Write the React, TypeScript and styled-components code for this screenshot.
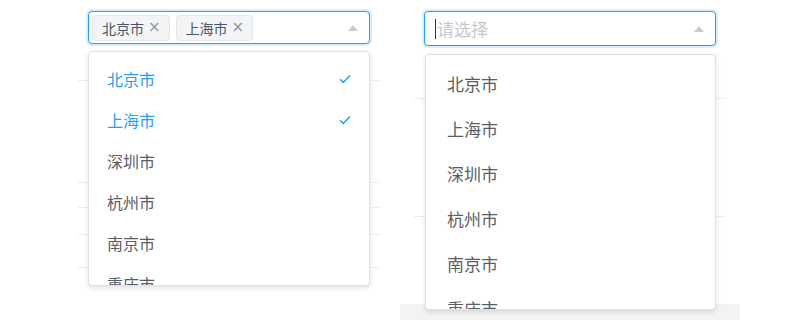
import React from 'react';
import styled, { createGlobalStyle } from 'styled-components';

const CITIES = ['北京市', '上海市', '深圳市', '杭州市', '南京市', '重庆市'];

const GlobalStyle = createGlobalStyle`
  html, body {
    margin: 0;
    padding: 0;
    background: #fff;
  }
  body {
    font-family: "Noto Sans CJK SC", "Noto Sans", sans-serif;
  }
`;

export default function App() {
  const selected = ['北京市', '上海市'];

  return (
    <Page>
      <GlobalStyle />
      <LeftPanel>
        <Select>
          <Tags>
            {selected.map((city) => (
              <Tag key={city}>
                {city}
                <TagClose>×</TagClose>
              </Tag>
            ))}
          </Tags>
          <Arrow />
        </Select>
        <Backdrop>
          <BackRow $h={36} />
          <BackRow $h={101} />
          <BackRow $h={24} />
          <BackRow $h={26} />
          <BackRow $h={32} />
        </Backdrop>
        <Dropdown $wide={false} $height={235} $rowHeight={41} $fontSize={16} $padLeft={18}>
          {CITIES.map((city) => {
            const isActive = selected.includes(city);
            return (
              <Option key={city} $active={isActive}>
                {city}
                {isActive && (
                  <CheckIcon viewBox="0 0 12 10" width="12" height="10">
                    <path d="M1 5.2 L4.3 8.4 L11 1.4" fill="none" stroke="#20a0ff" strokeWidth="1.5" />
                  </CheckIcon>
                )}
              </Option>
            );
          })}
        </Dropdown>
      </LeftPanel>

      <RightPanel>
        <Select $tall>
          <Placeholder>
            <Caret />
            请选择
          </Placeholder>
          <Arrow />
        </Select>
        <Backdrop>
          <BackRow $h={52} />
          <BackRow $h={117} />
        </Backdrop>
        <Dropdown $wide $height={256} $rowHeight={45} $fontSize={17} $padLeft={21}>
          {CITIES.map((city) => (
            <Option key={city} $active={false}>
              {city}
            </Option>
          ))}
        </Dropdown>
        <BottomStrip />
      </RightPanel>
    </Page>
  );
}

const Page = styled.div`
  display: flex;
  width: 800px;
  height: 320px;
  overflow: hidden;
  background: #fff;
`;

const LeftPanel = styled.div`
  position: relative;
  margin-left: 78px;
  width: 282px;
  padding: 11px 10px 0;
`;

const RightPanel = styled.div`
  position: relative;
  isolation: isolate;
  margin-left: 20px;
  width: 292px;
  padding: 11px 24px 0 24px;
`;

const Select = styled.div<{ $tall?: boolean }>`
  display: flex;
  align-items: center;
  justify-content: space-between;
  box-sizing: border-box;
  height: ${(p) => (p.$tall ? '35px' : '33px')};
  padding: 0 11px 0 3px;
  border: 1px solid #20a0ff;
  border-radius: 4px;
  box-shadow: 0 0 0 2px rgba(32, 160, 255, 0.18);
  background: #fff;
`;

const Tags = styled.div`
  display: flex;
  gap: 6px;
`;

const Tag = styled.span`
  display: flex;
  align-items: center;
  gap: 4px;
  box-sizing: border-box;
  height: 26px;
  padding: 0 8px 0 9px;
  border: 1px solid #e4e6ea;
  border-radius: 4px;
  background: #f3f4f6;
  color: #48576a;
  font-size: 14px;
`;

const TagClose = styled.span`
  font-family: "DejaVu Sans", sans-serif;
  font-size: 15px;
  color: #8a94a2;
  line-height: 1;
`;

const Arrow = styled.span`
  width: 0;
  height: 0;
  border-left: 5px solid transparent;
  border-right: 5px solid transparent;
  border-bottom: 6px solid #c8ccd2;
  margin-top: 1px;
`;

const Placeholder = styled.span`
  display: flex;
  align-items: center;
  padding-left: 7px;
  color: #c5c9cf;
  font-size: 17px;
`;

const Caret = styled.span`
  width: 1px;
  height: 20px;
  background: #333;
  margin-right: 1px;
`;

const Backdrop = styled.div`
  display: flex;
  flex-direction: column;
  margin: 0 -10px;
`;

const BackRow = styled.div<{ $h: number }>`
  height: ${(p) => p.$h}px;
  border-bottom: 1px solid #eceef1;
`;

const Dropdown = styled.ul<{
  $wide: boolean;
  $height: number;
  $rowHeight: number;
  $fontSize: number;
  $padLeft: number;
}>`
  position: absolute;
  top: ${(p) => (p.$wide ? 54 : 51)}px;
  left: ${(p) => (p.$wide ? 25 : 10)}px;
  right: ${(p) => (p.$wide ? 24 : 10)}px;
  height: ${(p) => p.$height}px;
  box-sizing: border-box;
  margin: 0;
  padding: 6px 0 0;
  list-style: none;
  overflow: hidden;
  background: #fff;
  border: 1px solid #dfe2e6;
  border-radius: 4px;
  box-shadow: 0 2px 5px rgba(0, 0, 0, 0.12);
  font-size: ${(p) => p.$fontSize}px;

  & > li {
    height: ${(p) => p.$rowHeight}px;
    padding-left: ${(p) => p.$padLeft}px;
  }
`;

const Option = styled.li<{ $active: boolean }>`
  display: flex;
  align-items: center;
  justify-content: space-between;
  padding-right: 18px;
  color: ${(p) => (p.$active ? '#20a0ff' : '#5a5e66')};
`;

const CheckIcon = styled.svg`
  display: block;
`;

const BottomStrip = styled.div`
  position: absolute;
  left: 0;
  right: 0;
  bottom: 0;
  height: 16px;
  background: #f3f3f3;
  z-index: -1;
`;
